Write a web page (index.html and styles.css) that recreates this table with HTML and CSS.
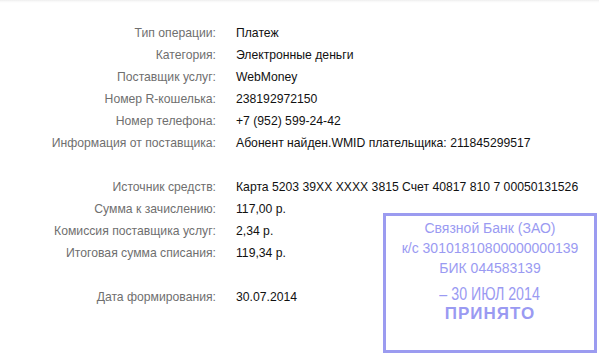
FILE: index.html
```html
<!DOCTYPE html>
<html lang="ru">
<head>
    <meta charset="UTF-8">
    <title>Детали операции</title>
    <link rel="stylesheet" href="styles.css">
</head>
<body>
    <div class="receipt">
        <dl class="details">
            <dt>Тип операции:</dt><dd>Платеж</dd>
            <dt>Категория:</dt><dd>Электронные деньги</dd>
            <dt>Поставщик услуг:</dt><dd>WebMoney</dd>
            <dt>Номер R-кошелька:</dt><dd>238192972150</dd>
            <dt>Номер телефона:</dt><dd>+7 (952) 599-24-42</dd>
            <dt>Информация от поставщика:</dt><dd>Абонент найден.WMID плательщика: 211845299517</dd>

            <div class="spacer"></div>

            <dt>Источник средств:</dt><dd>Карта 5203 39XX XXXX 3815 Счет 40817 810 7 00050131526</dd>
            <dt>Сумма к зачислению:</dt><dd>117,00 р.</dd>
            <dt>Комиссия поставщика услуг:</dt><dd>2,34 р.</dd>
            <dt>Итоговая сумма списания:</dt><dd>119,34 р.</dd>

            <div class="spacer"></div>

            <dt>Дата формирования:</dt><dd>30.07.2014</dd>
        </dl>

        <div class="stamp">
            <div class="stamp-line">Связной Банк (ЗАО)</div>
            <div class="stamp-line">к/с 30101810800000000139</div>
            <div class="stamp-line">БИК 044583139</div>
            <div class="stamp-date"><span>– 30 ИЮЛ 2014</span></div>
            <div class="stamp-status">ПРИНЯТО</div>
        </div>
    </div>
</body>
</html>
```

FILE: styles.css
```css
* {
    margin: 0;
    padding: 0;
    box-sizing: border-box;
}

body {
    font-family: 'Liberation Sans', Arial, sans-serif;
    font-size: 12.2px;
    color: #111;
    background: linear-gradient(#ececec 0, #f7f7f7 1px, #fff 3px) no-repeat;
    min-height: 100vh;
}

.receipt {
    position: relative;
    padding-top: 22px;
}

.details {
    display: grid;
    grid-template-columns: 216px 1fr;
    column-gap: 20px;
    line-height: 22px;
}

.details dt {
    text-align: right;
    color: #6f6f6f;
}

.details dd {
    white-space: nowrap;
}

.spacer {
    grid-column: 1 / -1;
    height: 22px;
}

/* bank stamp lies over the lower right of the table */
.stamp {
    position: absolute;
    left: 383px;
    top: 213px;
    width: 214px;
    height: 140px;
    border: 3px solid #9b9bf0;
    padding-top: 2px;
    text-align: center;
    color: #9a9af2;
    font-size: 14px;
}

.stamp-line {
    line-height: 20px;
}

/* date stamp uses a condensed face */
.stamp-date {
    margin-top: 6px;
    line-height: 20px;
    font-size: 18px;
}

.stamp-date span {
    display: inline-block;
    transform: scaleX(0.79);
}

.stamp-status {
    line-height: 20px;
    font-size: 17px;
    font-weight: bold;
    letter-spacing: 1px;
}
```
